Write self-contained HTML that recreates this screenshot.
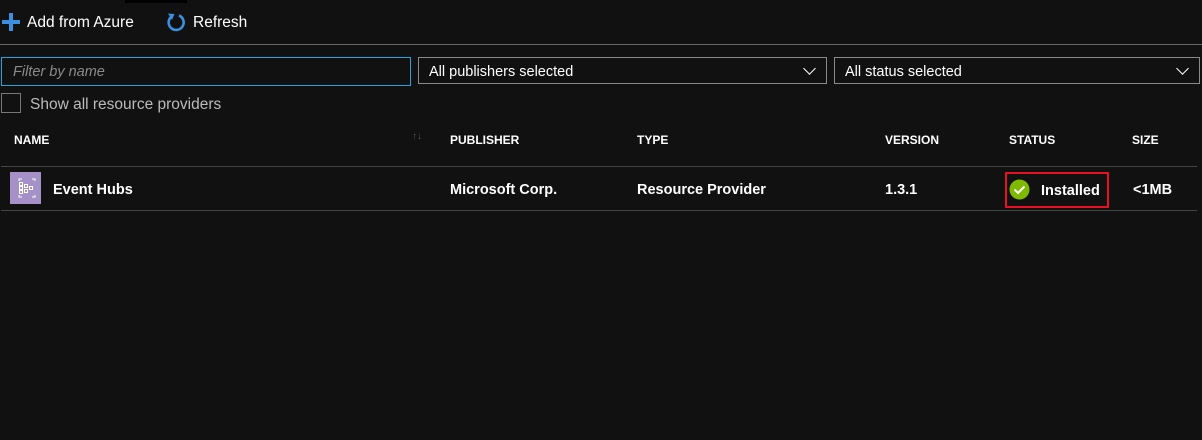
<!DOCTYPE html>
<html><head><style>
body{margin:0;width:1202px;height:440px;background:#111;font-family:"Liberation Sans",sans-serif;color:#fff;position:relative;overflow:hidden}
.a{position:absolute}
.hd{position:absolute;top:133px;font-size:12px;font-weight:bold}
.c{position:absolute;top:182px;font-size:14.5px;font-weight:bold}
.dd{position:absolute;top:57px;height:27px;border:1px solid #8a8a8a;box-sizing:border-box;font-size:14.5px;line-height:28px;padding-left:10px}
.chev{position:absolute;right:12px;top:6px;width:8px;height:8px;border-right:1.5px solid #fff;border-bottom:1.5px solid #fff;transform:rotate(45deg)}
</style></head><body>
<div class="a" style="left:125px;top:0;width:62px;height:3px;background:#000"></div>
<svg class="a" style="left:1px;top:12px" width="20" height="20"><path d="M10 1V19M1 10H19" stroke="#3b8fe0" stroke-width="4"/></svg>
<div class="a" style="left:27px;top:14px;font-size:15.5px">Add from Azure</div>
<svg class="a" style="left:165px;top:11px" width="22" height="22"><path d="M6 6A7.5 7.5 0 1 0 14 4.5" fill="none" stroke="#3b8fe0" stroke-width="2.6"/><path d="M3 2.5L9.5 3L7 9Z" fill="#3b8fe0"/></svg>
<div class="a" style="left:193px;top:14px;font-size:15.5px">Refresh</div>
<div class="a" style="left:0;top:44px;width:1202px;height:1px;background:#666"></div>
<div class="a" style="left:1px;top:57px;width:410px;height:29px;border:1px solid #1fa6dc;box-sizing:border-box;font-size:14.5px;font-style:italic;color:#8a8a8a;line-height:29px;padding-left:11px">Filter by name</div>
<div class="dd" style="left:418px;width:409px">All publishers selected<span class="chev"></span></div>
<div class="dd" style="left:834px;width:366px">All status selected<span class="chev"></span></div>
<div class="a" style="left:1px;top:93px;width:20px;height:20px;border:1px solid #777;box-sizing:border-box"></div>
<div class="a" style="left:30px;top:96px;font-size:15.5px;color:#bbb">Show all resource providers</div>
<div class="hd" style="left:14px">NAME</div>
<div class="a" style="left:412px;top:131px;font-size:10px;color:#555">↑↓</div>
<div class="hd" style="left:450px">PUBLISHER</div>
<div class="hd" style="left:637px">TYPE</div>
<div class="hd" style="left:885px">VERSION</div>
<div class="hd" style="left:1009px">STATUS</div>
<div class="hd" style="left:1132px">SIZE</div>
<div class="a" style="left:1px;top:166px;width:1196px;height:1px;background:#444"></div>
<div class="a" style="left:1px;top:210px;width:1196px;height:1px;background:#444"></div>
<div class="a" style="left:10px;top:172px;width:31px;height:32px;background:#a690c8"></div>
<svg class="a" style="left:10px;top:172px" width="31" height="32"><g fill="none" stroke="#fff" stroke-width="1"><path d="M9 9V7H12M22 7H25V9M9 23V25H12M22 25H25V23"/><rect x="9.5" y="10.5" width="3" height="3"/><rect x="9.5" y="14.5" width="3" height="3"/><rect x="9.5" y="18.5" width="3" height="3"/><rect x="14.5" y="12.5" width="3" height="3"/><rect x="14.5" y="17.5" width="3" height="3"/><rect x="19.5" y="14.5" width="3" height="3"/></g></svg>
<div class="c" style="left:53px">Event Hubs</div>
<div class="c" style="left:450px">Microsoft Corp.</div>
<div class="c" style="left:637px">Resource Provider</div>
<div class="c" style="left:885px">1.3.1</div>
<div class="a" style="left:1005px;top:172px;width:104px;height:36px;border:2px solid #e81123;box-sizing:border-box"></div>
<svg class="a" style="left:1009px;top:179px" width="21" height="21"><circle cx="10.5" cy="10.5" r="10" fill="#7fba00"/><path d="M5.5 10.5L9 14L15.5 7.5" fill="none" stroke="#fff" stroke-width="2"/></svg>
<div class="c" style="left:1041px;top:183px">Installed</div>
<div class="c" style="left:1133px">&lt;1MB</div>
</body></html>
